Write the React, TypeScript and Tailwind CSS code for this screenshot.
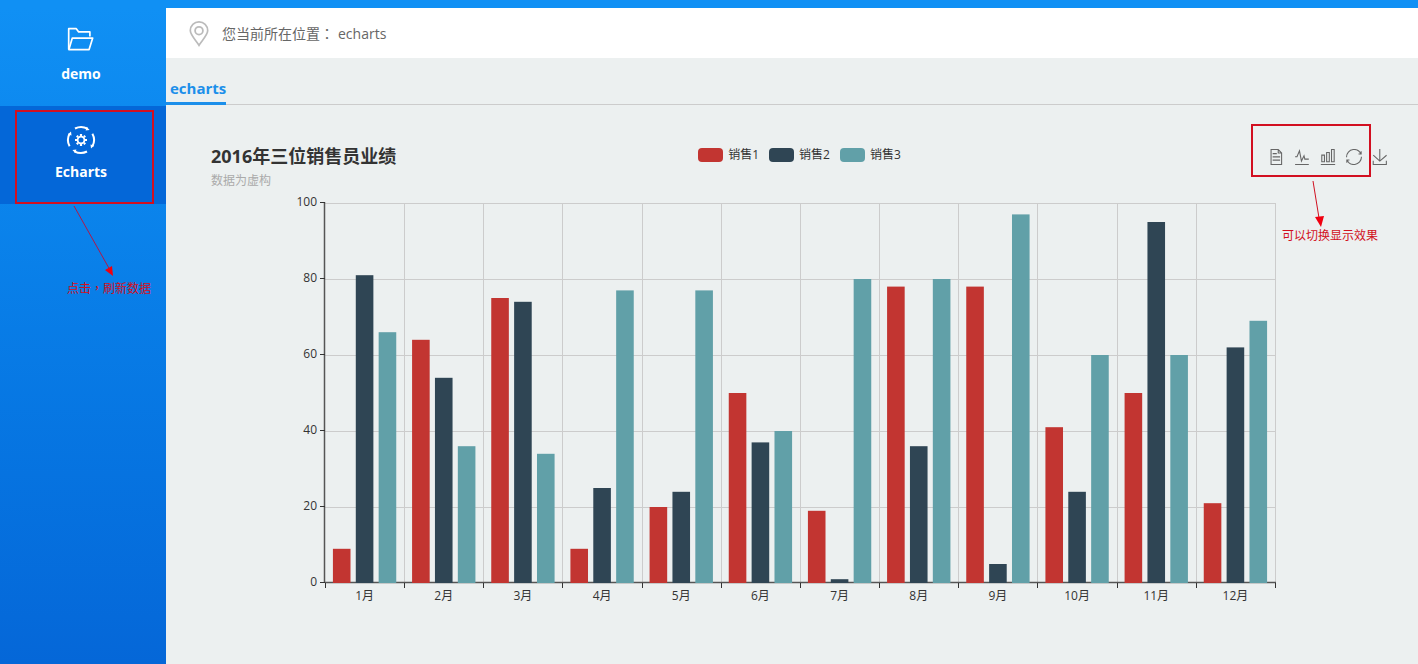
import React from "react";

const months = ["1月", "2月", "3月", "4月", "5月", "6月", "7月", "8月", "9月", "10月", "11月", "12月"];

const series = [
  { name: "销售1", color: "#c23531", values: [9, 64, 75, 9, 20, 50, 19, 78, 78, 41, 50, 21] },
  { name: "销售2", color: "#2f4554", values: [81, 54, 74, 25, 24, 37, 1, 36, 5, 24, 95, 62] },
  { name: "销售3", color: "#61a0a8", values: [66, 36, 34, 77, 77, 40, 80, 80, 97, 60, 60, 69] },
];

const tools = [
  {
    label: "数据视图",
    path: "M17.5,17.3H33M45.4,29.5h-28M11.5,2v56H51V14.8L38.4,2H11.5zM38.4,2.2v12.7H51M45.4,41.7h-28",
  },
  { label: "切换为折线图", path: "M4.1,28.9h7.1l9.3-22l7.4,38l9.7-19.7l3,12.8h14.9M4.1,58h51.4" },
  {
    label: "切换为柱状图",
    path: "M6.7,22.9h10V48h-10V22.9zM24.9,13h10v35h-10V13zM43.2,2h10v46h-10V2zM3.1,58h53.7",
  },
  {
    label: "还原",
    path: "M47,18.9h9.8V8.7M56.3,20.1C52.1,9,40.5,0.6,26.8,2.1C12.6,3.7,1.6,16.2,2.1,30.6M13,41.1H3.1v10.2M3.7,39.9c4.2,11.1,15.8,19.5,29.5,18c14.2-1.6,25.2-14.1,24.7-28.5",
  },
  {
    label: "保存为图片",
    path: "M4.7,22.9L29.3,45.5L54.7,23.4M4.6,43.6L4.6,58L53.8,58L53.8,43.6M29.2,45.1L29.2,0",
  },
];

const plot = { left: 119, top: 10, width: 950, height: 380 };

function BarChart() {
  const band = plot.width / months.length;
  const bar = (band * 0.8) / 3.6;
  const bottom = plot.top + plot.height;
  const right = plot.left + plot.width;
  const yOf = (v: number) => bottom - (v / 100) * plot.height;
  const edges = Array.from({ length: months.length + 1 }, (_, i) => Math.round(plot.left + i * band - 0.1) + 0.5);
  return (
    <svg viewBox="0 0 1188 450" className="block w-full text-xs" role="img" aria-label="2016年三位销售员业绩">
      {[20, 40, 60, 80, 100].map((v) => (
        <path key={v} d={`M${plot.left} ${yOf(v) + 0.5}H${right}`} stroke="#ccc" />
      ))}
      {edges.slice(1).map((x) => (
        <path key={x} d={`M${x} ${plot.top}V${bottom}`} stroke="#ccc" />
      ))}
      <path d={`M${plot.left} ${bottom - 0.5}H${right + 1}`} stroke="#555" strokeWidth="1.5" />
      <path d={`M${plot.left - 0.5} ${plot.top - 1}V${bottom}`} stroke="#555" strokeWidth="1.5" />
      {series.map((s, si) =>
        s.values.map((v, i) => (
          <rect
            key={s.name + i}
            x={plot.left + i * band + band * 0.1 + si * bar * 1.3}
            y={yOf(v)}
            width={bar}
            height={bottom - yOf(v)}
            fill={s.color}
          />
        )),
      )}
      {edges.map((x) => (
        <path key={x} d={`M${x} ${bottom}v5`} stroke="#333" />
      ))}
      {[0, 20, 40, 60, 80, 100].map((v) => (
        <g key={v}>
          <path d={`M${plot.left - 5} ${yOf(v) - 0.5}h5`} stroke="#333" />
          <text x={plot.left - 8} y={yOf(v) + 3} textAnchor="end" fill="#333">
            {v}
          </text>
        </g>
      ))}
      {months.map((m, i) => (
        <text key={m} x={plot.left + (i + 0.5) * band} y={bottom + 17} textAnchor="middle" fill="#333">
          {m}
        </text>
      ))}
    </svg>
  );
}

function FolderIcon() {
  return (
    <svg viewBox="0 0 30 30" className="size-[30px]" fill="none" stroke="currentColor" strokeWidth="1.7" strokeLinejoin="round">
      <path d="M2.7 22.5V1.7h7.6l2.4 3.2h11.2v4.5" />
      <path d="M6.3 11.1h20.4l-3.6 11.5H2.9z" />
    </svg>
  );
}

function GearIcon() {
  return (
    <svg viewBox="0 0 30 30" className="size-[30px]" fill="none" stroke="currentColor">
      <g strokeWidth="2">
        <path d="M9 3.5A13 13 0 0 1 21.5 3.7" />
        <path d="M26.4 8.7A13 13 0 0 1 26.3 21.4" />
        <path d="M21 26.5A13 13 0 0 1 8.5 26.3" />
        <path d="M3.6 21.3A13 13 0 0 1 3.7 8.6" />
      </g>
      <g fill="currentColor" stroke="none">
        <path d="M20.6 1.8l3 3.2-4 .4zM28.2 20.4l-3.2 3-.5-4zM9.4 28.2l-3-3.2 4-.5zM1.8 9.6l3.2-3 .5 4z" />
      </g>
      <circle cx="15" cy="15" r="3.4" strokeWidth="1.8" />
      <path
        d="M15 9v2M15 19v2M9 15h2M19 15h2M10.8 10.8l1.3 1.3M17.9 17.9l1.3 1.3M10.8 19.2l1.3-1.3M17.9 12.1l1.3-1.3"
        strokeWidth="2.2"
      />
    </svg>
  );
}

export default function App() {
  return (
    <div className="flex min-h-screen flex-col bg-[#ecf0f0] font-['Open_Sans','Noto_Sans_CJK_SC',sans-serif] text-[#333]">
      <div className="h-2 shrink-0 bg-[#1090f4]" />
      <div className="flex flex-1">
        <nav className="w-[166px] shrink-0 bg-linear-to-b from-[#1090f4] to-[#0567d8] text-sm font-bold text-white">
          <a href="#demo" className="flex h-[98px] flex-col items-center gap-[7px] pt-[19px] pr-1 leading-5">
            <FolderIcon />
            demo
          </a>
          <div className="relative">
            <a href="#echarts" className="flex h-[98px] flex-col items-center gap-[7px] bg-[#0467d8] pt-[19px] pr-1 leading-5">
              <GearIcon />
              Echarts
            </a>
            <div className="pointer-events-none absolute top-1 left-[15px] h-[94px] w-[139px] border-2 border-[#d20f20]" />
            <svg viewBox="0 0 44 74" className="absolute top-[99px] left-[72px] h-[74px] w-11">
              <path d="M2 1L38 65" stroke="#b01848" />
              <path d="M41 71L33 65L40 61z" fill="#f00010" />
            </svg>
            <p className="absolute top-[174px] left-[67px] font-['Noto_Sans_CJK_TC',sans-serif] text-xs leading-4 font-normal whitespace-nowrap text-[#d20f20]">
              点击，刷新数据
            </p>
          </div>
        </nav>
        <main className="min-w-0 flex-1">
          <header className="flex h-[50px] items-center gap-3 bg-white pt-0.5 pl-[22px] text-sm text-[#666]">
            <svg viewBox="0 0 22 26" className="h-[26px] w-[22px]" fill="none" stroke="#bbb">
              <path d="M11 24.3C8.5 20 2.3 14.2 2.3 9.6a8.7 8.7 0 0 1 17.4 0C19.7 14.2 13.5 20 11 24.3z" strokeWidth="1.7" />
              <circle cx="11" cy="9.7" r="3.9" strokeWidth="1.8" />
            </svg>
            <p className="flex items-center gap-1 leading-5">
              <span className="font-['Open_Sans','Noto_Sans_CJK_TC',sans-serif]">您当前所在位置：</span>
              <span>echarts</span>
            </p>
          </header>
          <div className="flex h-[47px] items-end border-b border-[#ccc]">
            <h1 className="-mb-px border-b-[3px] border-[#1c8fea] pb-0.5 pl-1 text-[15px] leading-6 font-bold text-[#1c8fea]">
              echarts
            </h1>
          </div>
          <section className="mt-[38px] mr-6 ml-10">
            <div className="grid h-[50px] grid-cols-[1fr_auto_1fr] items-start pr-1.5 pl-[5px]">
              <div>
                <h2 className="text-lg leading-[26px] font-bold">2016年三位销售员业绩</h2>
                <p className="text-xs leading-6 text-[#aaa]">数据为虚构</p>
              </div>
              <ul className="flex gap-2.5 pt-[3px] text-xs leading-[18px]">
                {series.map((s) => (
                  <li key={s.name} className="flex items-center gap-[5px]">
                    <span className="h-3.5 w-[25px] rounded" style={{ backgroundColor: s.color }} />
                    {s.name}
                  </li>
                ))}
              </ul>
              <div className="relative flex justify-end gap-2.5 pt-1.5">
                {tools.map((t) => (
                  <button key={t.label} type="button" aria-label={t.label} className="size-4">
                    <svg viewBox="0 0 60 60" className="size-4" fill="none" stroke="#666" strokeWidth="4">
                      <path d={t.path} />
                    </svg>
                  </button>
                ))}
                <div className="pointer-events-none absolute -top-[19px] right-[17px] h-[53px] w-[120px] border-2 border-[#d20f20]" />
                <svg viewBox="0 0 20 50" className="absolute top-[37px] right-[60px] h-[50px] w-5">
                  <path d="M5 1L11 38" stroke="#d01020" />
                  <path d="M13 47L7 37L16 36z" fill="#f00010" />
                </svg>
                <p className="absolute top-[85px] right-2.5 text-xs leading-4 whitespace-nowrap text-[#d20f20]">
                  可以切换显示效果
                </p>
              </div>
            </div>
            <BarChart />
          </section>
        </main>
      </div>
    </div>
  );
}
